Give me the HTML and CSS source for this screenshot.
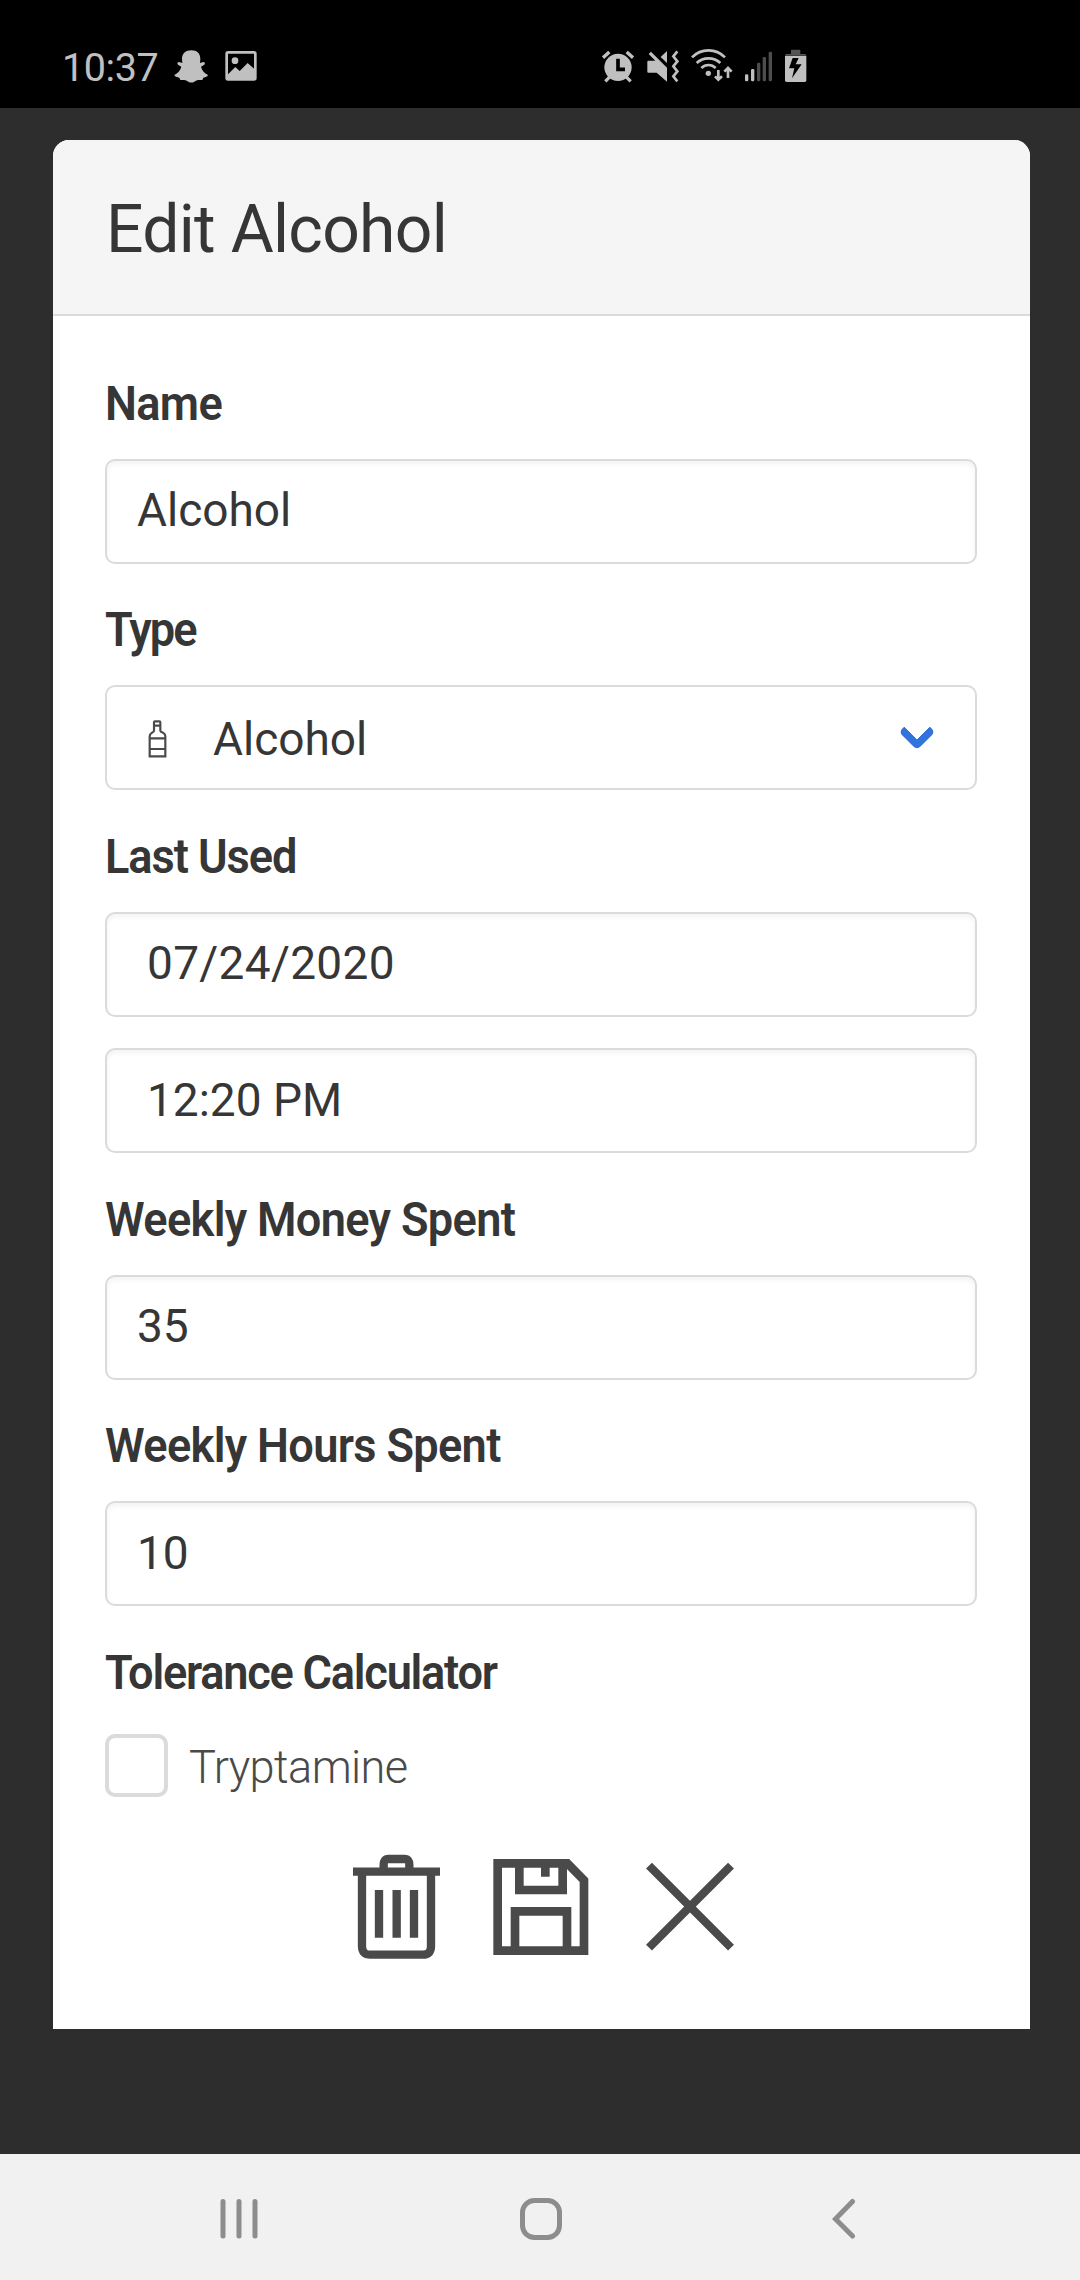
FILE: index.html
```html
<!DOCTYPE html>
<html lang="en">
<head>
<meta charset="utf-8">
<title>Edit Alcohol</title>
<link rel="stylesheet" href="styles.css">
</head>
<body>
<div class="screen">
  <div class="status-bar">
    <div class="status-left">
      <span class="clock">10:37</span>
      <svg class="status-icon" width="34" height="34" viewBox="0 0 102 102"><path fill="currentColor" d="M52 4C69 4 79 14 79 30L78 42 88 39Q96 41 91 47L81 53C84 65 92 73 101 77Q103 81 97 83L88 86 85 93H73Q67 94 61 98 52 103 43 98 36 94 31 93H19L16 86 6 83Q0 81 2 77C11 73 19 65 22 53L12 47Q7 41 15 39L25 42 24 30C24 14 35 4 52 4Z"/></svg>
      <svg class="status-icon" width="32" height="34" viewBox="0 0 96 102"><rect x="5" y="10" width="86" height="81" rx="4" fill="none" stroke="currentColor" stroke-width="8"/><circle cx="30" cy="35" r="10" fill="currentColor"/><path fill="currentColor" d="M9 76L31 54 44 66 68 42 88 60V91H9Z"/></svg>
    </div>
    <div class="status-right">
      <svg class="status-icon" width="32" height="34" viewBox="0 0 96 102"><circle cx="48" cy="55" r="41" fill="currentColor"/><g fill="none" stroke="currentColor" stroke-width="10"><path d="M3 26L22 9M74 9L93 26M10 97L24 83M86 97L72 83"/></g><path d="M48 29V61H69" fill="none" stroke="#000" stroke-width="11"/></svg>
      <svg class="status-icon" width="32" height="34" viewBox="0 0 96 102"><path fill="currentColor" d="M5 15L12 8 60 56V98L29 71H4Q1 71 1 68V38Q1 35 4 35H25ZM41 24L60 6V42Z"/><path d="M91 7L79 22 91 37 79 52 91 67 79 82 91 97" fill="none" stroke="currentColor" stroke-width="8"/></svg>
      <svg class="status-icon" width="42" height="34" viewBox="0 0 126 102"><g fill="none" stroke="currentColor" stroke-width="8"><path d="M3 25A69 69 0 0 1 102 25M17 42A52 52 0 0 1 88 42M31 57A30 30 0 0 1 74 57"/><path d="M82 63V90M72 82L82 92 93 82M111 87V58M100 68L111 57 122 68"/></g><circle cx="52" cy="73" r="8" fill="currentColor"/></svg>
      <svg class="status-icon" width="28" height="34" viewBox="0 0 84 102"><g fill="currentColor"><rect y="76" width="10" height="21" rx="4"/><rect x="18" y="60" width="10" height="37" rx="4"/></g><g fill="#4d4d4d"><rect x="36" y="41" width="10" height="56" rx="4"/><rect x="53" y="24" width="10" height="73" rx="4"/><rect x="71" y="8" width="10" height="89" rx="4"/></g></svg>
      <svg class="status-icon" width="22" height="34" viewBox="0 0 66 102"><path fill="#555" d="M18 4Q18 2 20 2H43Q46 2 46 4V15H60Q64 15 64 20H0Q0 15 4 15H18Z"/><path fill="currentColor" d="M0 21H64V94Q64 99 59 99H5Q0 99 0 94Z"/><path fill="#000" d="M23 27H41L32 46H50L21 88 28 58H12Z"/></svg>
    </div>
  </div>

  <main class="backdrop">
    <form class="card">
      <header class="card-head"><h1 class="title">Edit Alcohol</h1></header>
      <div class="card-body">
        <div class="field">
          <label class="label">Name</label>
          <div class="input">Alcohol</div>
        </div>
        <div class="field">
          <label class="label label-type">Type</label>
          <div class="input select">
            <svg class="bottle" width="19" height="38" viewBox="0 0 57 114"><g fill="none" stroke="currentColor" stroke-width="6.5"><path d="M18 19V7Q18 4 21 4H34Q37 4 37 7V19M18 17H37M18 17V32Q18 35 12 38 5 42 5 49V109H52V49Q52 42 45 38 37 35 37 32V17M5 55H52M5 87H52"/></g></svg>
            <span>Alcohol</span>
            <span class="chevron"></span>
          </div>
        </div>
        <div class="field">
          <label class="label label-last">Last Used</label>
          <div class="input picker date">07/24/2020</div>
          <div class="input picker">12:20 PM</div>
        </div>
        <div class="field">
          <label class="label">Weekly Money Spent</label>
          <div class="input">35</div>
        </div>
        <div class="field">
          <label class="label">Weekly Hours Spent</label>
          <div class="input">10</div>
        </div>
        <div class="field">
          <label class="label label-tolerance">Tolerance Calculator</label>
          <div class="check"><span class="box"></span><span class="check-text">Tryptamine</span></div>
        </div>
        <div class="actions">
          <svg width="88" height="105" viewBox="0 0 264 315"><g fill="none" stroke="currentColor" stroke-width="25"><path d="M0 53H261M92 53V32Q92 15 106 15H155Q169 15 169 32V53M27 53V277Q27 302 52 302H210Q234 302 234 277V53M78 108V251M131 108V251M183 108V251"/></g></svg>
          <svg width="96" height="105" viewBox="0 0 288 315"><g fill="none" stroke="currentColor" stroke-width="26"><path d="M14 28H223L273 79V290H14ZM79 28V108H209V28M157 28V68M66 290V172H222V290"/></g></svg>
          <svg width="88" height="105" viewBox="0 0 264 315"><path d="M9 35L255 281M255 35L9 281" fill="none" stroke="currentColor" stroke-width="25"/></svg>
        </div>
      </div>
    </form>
  </main>

  <nav class="nav-bar">
    <svg width="38" height="42" viewBox="0 0 38 42"><path d="M3 3.500V38M19 3.500V38M35 3.500V38" stroke="currentColor" stroke-width="5" stroke-linecap="round"/></svg>
    <svg class="home" width="42" height="42" viewBox="0 0 42 42"><rect x="2.500" y="2.500" width="37" height="37" rx="12" fill="none" stroke="currentColor" stroke-width="5"/></svg>
    <svg width="24" height="42" viewBox="0 0 24 42"><path d="M20.500 3.500L3.500 21 20.500 38" fill="none" stroke="currentColor" stroke-width="5" stroke-linecap="round"/></svg>
  </nav>
</div>
</body>
</html>
```
FILE: styles.css
```css
* { box-sizing: border-box; }
body { margin: 0; font-family: Roboto, sans-serif; color: #363636; }
svg { display: block; flex: none; }
.screen { width: 1080px; height: 2280px; display: flex; flex-direction: column; background: #2d2d2d; }

.status-bar { height: 108px; background: #000; color: #c0c0c0; display: flex; padding-top: 49px; }
.status-left, .status-right { display: flex; align-items: flex-start; }
.status-left { width: 602px; padding-left: 62px; }
.clock { width: 112px; font-size: 39.500px; line-height: 37px; letter-spacing: -.4px; }
.status-left .status-icon + .status-icon { margin-left: 17px; }
.status-right { gap: 12px; }
.status-right .status-icon:first-child { margin-right: 1px; }

.backdrop { flex: 1; min-height: 0; padding: 32px 50px 0 53px; }
.card { height: 1889px; background: #fff; border-radius: 16px 16px 0 0; overflow: hidden; }
.card-head { height: 176px; padding: 53px; background: #f5f5f5; border-bottom: 2px solid #dbdbdb; }
.title { margin: 0; font-weight: 400; font-size: 66px; line-height: 74px; letter-spacing: -.7px; }
.card-body { padding: 52.500px 53px 0 52px; }
.field { margin-bottom: 31.500px; }

/* Labels are set slightly condensed */
.label { display: block; height: 69px; margin-bottom: 21px; font-size: 48px; font-weight: 600; line-height: 69px; letter-spacing: -.7px; transform: scaleX(.94); transform-origin: left; }
.label-type { letter-spacing: -2px; }
.label-last { letter-spacing: -1.100px; }
.label-tolerance { letter-spacing: -1.300px; }

.input { height: 105px; display: flex; align-items: center; padding: 0 30px 2px; border: 2px solid #dbdbdb; border-radius: 10px; font-size: 46px; box-shadow: inset 0 3px 5px rgba(10, 10, 10, .05); }
.picker { padding-left: 40px; }
.picker + .picker { margin-top: 31.500px; }
.date { letter-spacing: .3px; }
.select { box-shadow: none; padding-left: 41px; padding-top: 3px; padding-bottom: 0; }
.bottle { color: #4a4a4a; margin-right: 46px; }
.chevron { width: 26px; height: 26px; margin: -15px 15px 0 auto; border: solid #3273dc; border-width: 0 0 8px 8px; border-radius: 5px; transform: rotate(-45deg); }
.check { height: 63px; margin-top: 27px; display: flex; align-items: center; color: #4a4a4a; }
.box { width: 63px; height: 63px; border: 4px solid #dbdbdb; border-radius: 10px; margin-right: 21px; }
.check-text { font-size: 47px; font-weight: 350; padding-top: 2px; letter-spacing: -.6px; transform: scaleX(.96); transform-origin: left; }
.actions { display: flex; gap: 53px; margin: 57px 0 0 248px; color: #4a4a4a; }
.actions svg:last-child { margin-left: 4px; }
.actions svg:nth-child(2) { margin-left: -1px; }

.nav-bar { height: 126px; background: #f1f1f1; color: #8d8d8d; display: flex; align-items: center; padding: 4px 224px 0 220px; justify-content: space-between; }
.home { margin-right: 8px; }
```
